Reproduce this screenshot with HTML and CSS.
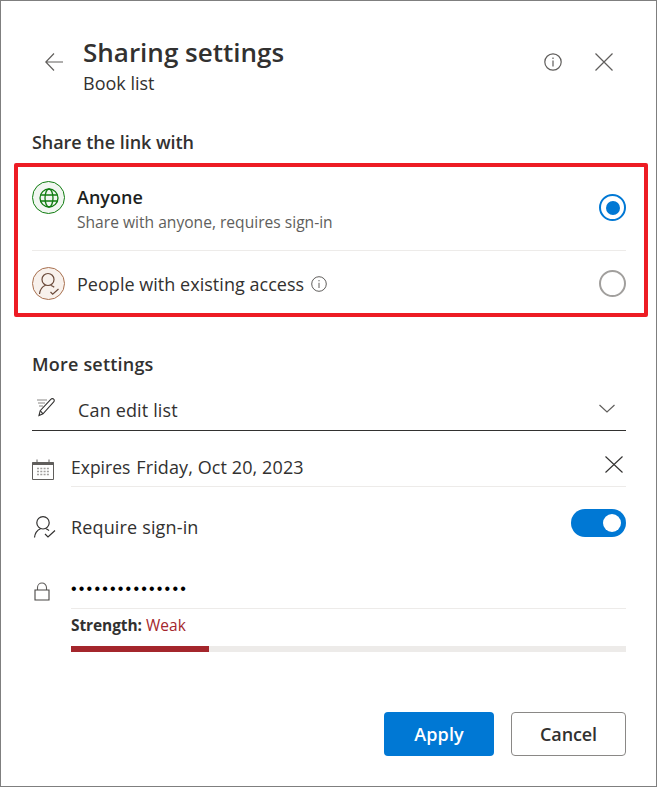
FILE: index.html
```html
<!DOCTYPE html>
<html lang="en">
<head>
<meta charset="utf-8">
<title>Sharing settings</title>
<link rel="stylesheet" href="styles.css">
</head>
<body>
<main class="dialog">
  <header class="head">
    <button class="icon-btn back" aria-label="Back">
      <svg width="18" height="18" viewBox="0 0 18 18"><path d="M18 9H.8M9 .5.8 9 9 17.500" class="line"/></svg>
    </button>
    <div class="titles">
      <h1 class="title">Sharing settings</h1>
      <div class="subtitle">Book list</div>
    </div>
    <div class="head-actions">
      <svg class="info-lg" width="18" height="18" viewBox="0 0 18 18"><circle cx="9" cy="9" r="8.2" class="line"/><path d="M9 7.600V13.400M9 4.600v1.500" class="line"/></svg>
      <svg class="close-lg" width="18" height="18" viewBox="0 0 18 18"><path d="M.5.5l17 17M17.500.5l-17 17" class="line"/></svg>
    </div>
  </header>

  <h2 class="section-title share-title">Share the link with</h2>

  <section class="highlight">
    <div class="option option-anyone">
      <span class="avatar avatar-green">
        <svg width="22" height="22" viewBox="0 0 22 22"><g fill="none" stroke="#107c10" stroke-width="1.300"><circle cx="11" cy="11" r="9"/><ellipse cx="11" cy="11" rx="4" ry="9"/><path d="M2.600 8h16.800M2.600 14h16.800"/></g></svg>
      </span>
      <div class="option-text">
        <div class="option-name">Anyone</div>
        <div class="option-desc">Share with anyone, requires sign-in</div>
      </div>
      <span class="radio radio-on"></span>
    </div>
    <div class="option option-people">
      <span class="avatar avatar-brown">
        <svg width="22" height="24" viewBox="0 0 22 24"><g fill="none" stroke="#6b4a3a" stroke-width="1.200"><circle cx="10" cy="7.500" r="6"/><path d="M1.500 22c.4-4.500 3-7.500 6-8.800M13 13.500c1.200.4 2.300 1 3.200 1.800"/><path d="M12.500 20l2.200 2.200L20.500 17"/></g></svg>
      </span>
      <div class="option-text option-inline">
        <span class="option-plain">People with existing access</span>
        <svg width="16" height="16" viewBox="0 0 16 16"><circle cx="8" cy="8" r="7.300" class="line thin"/><path d="M8 6.800V12M8 4v1.300" class="line thin"/></svg>
      </div>
      <span class="radio"></span>
    </div>
  </section>

  <h2 class="section-title more-title">More settings</h2>

  <div class="dropdown">
    <svg class="pencil" width="22" height="20" viewBox="0 0 22 20"><g fill="none" stroke="#323130" stroke-width="1.100"><path d="M3 18.500l1.200-4.800L15 2.200a1.800 1.800 0 0 1 2.700 0 1.800 1.800 0 0 1 0 2.600L7 16.800z"/><path d="M4.200 13.700l2.800 3.100"/></g><path d="M1 3h10M2 6h7M3 9h4" stroke="#8a8886" stroke-width="1.100"/></svg>
    <span class="dropdown-text">Can edit list</span>
    <svg class="chevron" width="16" height="9" viewBox="0 0 16 9"><path d="M.5 1 8 8l7.500-7" class="line"/></svg>
  </div>

  <div class="row row-expires">
    <svg class="row-icon cal" width="22" height="21" viewBox="0 0 22 21"><path d="M.5 3.500h21v17H.5z" fill="none" stroke="#605e5c"/><path d="M.5 3h21v3H.5z" fill="#605e5c"/><path d="M5 .5V4M17 .5V4" stroke="#605e5c"/><path d="M5 9.500h12M5 12.500h12M5 15.500h12" stroke="#a19f9d" stroke-width="1.400" stroke-dasharray="2 1.300"/></svg>
    <div class="row-body row-underlined">
      <span class="row-label">Expires</span>
      <span class="row-value">Friday, Oct 20, 2023</span>
      <svg class="clear" width="18" height="17" viewBox="0 0 18 17"><path d="M.5.5l17 16M17.500.5l-17 16" stroke="#323130" stroke-width="1.100" fill="none"/></svg>
    </div>
  </div>

  <div class="row row-signin">
    <svg class="row-icon" width="23" height="23" viewBox="0 0 23 23"><g fill="none" stroke="#323130" stroke-width="1.200"><circle cx="10" cy="6.800" r="6.200"/><path d="M1.500 21.500c.4-4.500 3-7.500 6-8.800M13 12.800c1.200.4 2.200 1 3 1.800"/><path d="M12 18l3 3 7-6.500"/></g></svg>
    <div class="row-body">
      <span class="row-label">Require sign-in</span>
      <span class="toggle"><span class="knob"></span></span>
    </div>
  </div>

  <div class="row row-password">
    <svg class="row-icon lock" width="16" height="19" viewBox="0 0 16 19"><path d="M3.500 8V5.500a4.500 4.500 0 0 1 9 0V8" fill="none" stroke="#605e5c" stroke-width="1.100"/><path d="M1 8h14v10H1z" fill="#fff" stroke="#484644" stroke-width="1.100"/></svg>
    <div class="password">•••••••••••••••</div>
  </div>

  <div class="strength">
    <div class="strength-label"><strong class="strength-key">Strength:</strong> <span class="strength-val">Weak</span></div>
    <div class="meter"><div class="meter-fill"></div></div>
  </div>

  <footer class="actions">
    <button class="btn btn-primary">Apply</button>
    <button class="btn btn-default">Cancel</button>
  </footer>
</main>
</body>
</html>
```
FILE: styles.css
```css
* { box-sizing: border-box; }
html, body { margin: 0; padding: 0; background: #fff; }
body { font-family: "Open Sans", "Noto Sans", "Liberation Sans", sans-serif; color: #323130; }
.dialog {
  width: 657px;
  height: 787px;
  border: 1px solid #7f7f7f;
  display: flex;
  flex-direction: column;
  background: #fff;
  overflow: hidden;
}
.line { fill: none; stroke: #605e5c; stroke-width: 1.200; }
.thin { stroke-width: 1; }

.head { display: flex; align-items: flex-start; height: 98px; padding: 33px 43px 0 44px; }
.icon-btn { background: none; border: 0; padding: 0; margin: 0; display: block; line-height: 0; }
.back { margin-top: 19px; }
.titles { margin-left: 20px; flex: 1; }
.title { margin: 0; font-size: 26px; line-height: 36px; font-weight: 600; color: #323130; }
.subtitle { font-size: 18px; line-height: 24px; margin-top: 1px; }
.head-actions { display: flex; align-items: center; margin-top: 19px; }
.info-lg { margin-right: 33px; }

.section-title { margin: 0 0 0 31px; font-size: 18px; font-weight: 600; line-height: 24px; }
.share-title { margin-top: 31px; letter-spacing: -0.05px; }

.highlight {
  margin: 9px 8px 0 13px;
  height: 154px;
  border: 4px solid #ed1c24;
  border-radius: 2px;
  padding: 0 18px 0 14px;
  display: flex;
  flex-direction: column;
}
.option { display: flex; }
.option-anyone { height: 84px; border-bottom: 1px solid #edebe9; align-items: flex-start; }
.option-people { flex: 1; align-items: center; }
.avatar {
  width: 33px; height: 33px; border-radius: 50%;
  display: flex; align-items: center; justify-content: center;
  flex: none;
}
.avatar-green { background: #f1f6f1; border: 1px solid #107c10; }
.avatar-brown { background: #f8f1ec; border: 1px solid #a8704f; }
.option-text { margin-left: 12px; flex: 1; }
.option-anyone .avatar { margin-top: 14px; }
.option-anyone .option-text { margin-top: 18px; }
.option-anyone .radio { margin-top: 27px; }
.option-people .avatar, .option-people .option-text, .option-people .radio { margin-top: 3px; }
.option-name { font-size: 18px; line-height: 24px; font-weight: 600; color: #201f1e; }
.option-desc { font-size: 15.6px; line-height: 21px; margin-top: 3px; color: #605e5c; }
.option-inline { display: flex; align-items: center; gap: 7px; }
.option-plain { font-size: 18px; line-height: 24px; letter-spacing: 0.03px; }
.radio { width: 27px; height: 27px; border-radius: 50%; border: 2px solid #a19f9d; flex: none; background: #fff; }
.radio-on { border-color: #0078d4; display: flex; align-items: center; justify-content: center; }
.radio-on::after { content: ""; width: 14px; height: 14px; border-radius: 50%; background: #0078d4; }

.more-title { margin-top: 35px; letter-spacing: 0.2px; }
.dropdown {
  margin: 11px 30px 0 31px;
  height: 44px;
  border-bottom: 1px solid #323130;
  display: flex;
  align-items: flex-start;
}
.pencil { margin: 10px 0 0 4px; flex: none; }
.dropdown-text { margin-left: 20px; font-size: 18px; line-height: 24px; margin-top: 11px; flex: 1; letter-spacing: 0.15px; }
.chevron { margin: 17px 11px 0 0; }

.row { display: flex; margin: 0 30px 0 31px; }
.row-icon { flex: none; }
.row-body { flex: 1; display: flex; margin-left: 17px; }
.row-expires { margin-top: 26px; height: 30px; }
.row-underlined { border-bottom: 1px solid #edebe9; height: 32px; align-items: flex-start; margin-top: -2px; }
.cal { margin-top: 2px; }
.row-label { font-size: 18px; line-height: 24px; }
.row-expires .row-label { font-size: 17.500px; }
.row-value { font-size: 18px; line-height: 24px; margin-left: 6px; flex: 1; letter-spacing: 0.1px; }
.clear { margin: 1px 3px 0 0; }
.row-signin { margin-top: 29px; height: 30px; }
.row-signin .row-icon { margin-left: 1px; }
.row-signin .row-body { margin-left: 15px; align-items: flex-start; justify-content: space-between; }
.row-signin .row-label { margin-top: -1px; letter-spacing: 0.15px; }
.toggle {
  width: 55px; height: 28px; border-radius: 14px; background: #0078d4;
  display: flex; align-items: center; justify-content: flex-end; padding-right: 5px;
  margin-top: -7px;
}
.knob { width: 18px; height: 18px; border-radius: 50%; background: #fff; }
.row-password { margin-top: 20px; height: 43px; }
.lock { margin: 16px 0 0 2px; }
.password {
  flex: 1; margin-left: 21px; height: 43px; border-bottom: 1px solid #edebe9;
  font-family: "Liberation Sans", sans-serif; font-size: 16px; line-height: 30px; color: #000;
  letter-spacing: 2.2px; padding-top: 8px;
}
.strength { margin: 6px 30px 0 70px; }
.strength-label { font-size: 15.500px; line-height: 21px; }
.strength-key { font-weight: 700; letter-spacing: -0.1px; }
.strength-val { color: #a4262c; letter-spacing: 0.05px; }
.meter { height: 6px; background: #edebe9; margin-top: 10px; }
.meter-fill { width: 138px; height: 6px; background: #a4262c; }

.actions { margin-top: auto; padding: 0 30px 30px 0; display: flex; justify-content: flex-end; gap: 17px; }
.btn { height: 44px; border-radius: 4px; font-family: inherit; font-size: 18px; font-weight: 600; padding: 0; letter-spacing: -0.1px; }
.btn-primary { width: 110px; background: #0078d4; color: #fff; border: 0; letter-spacing: 0.1px; }
.btn-default { width: 115px; background: #fff; color: #323130; border: 1px solid #8a8886; }
```
